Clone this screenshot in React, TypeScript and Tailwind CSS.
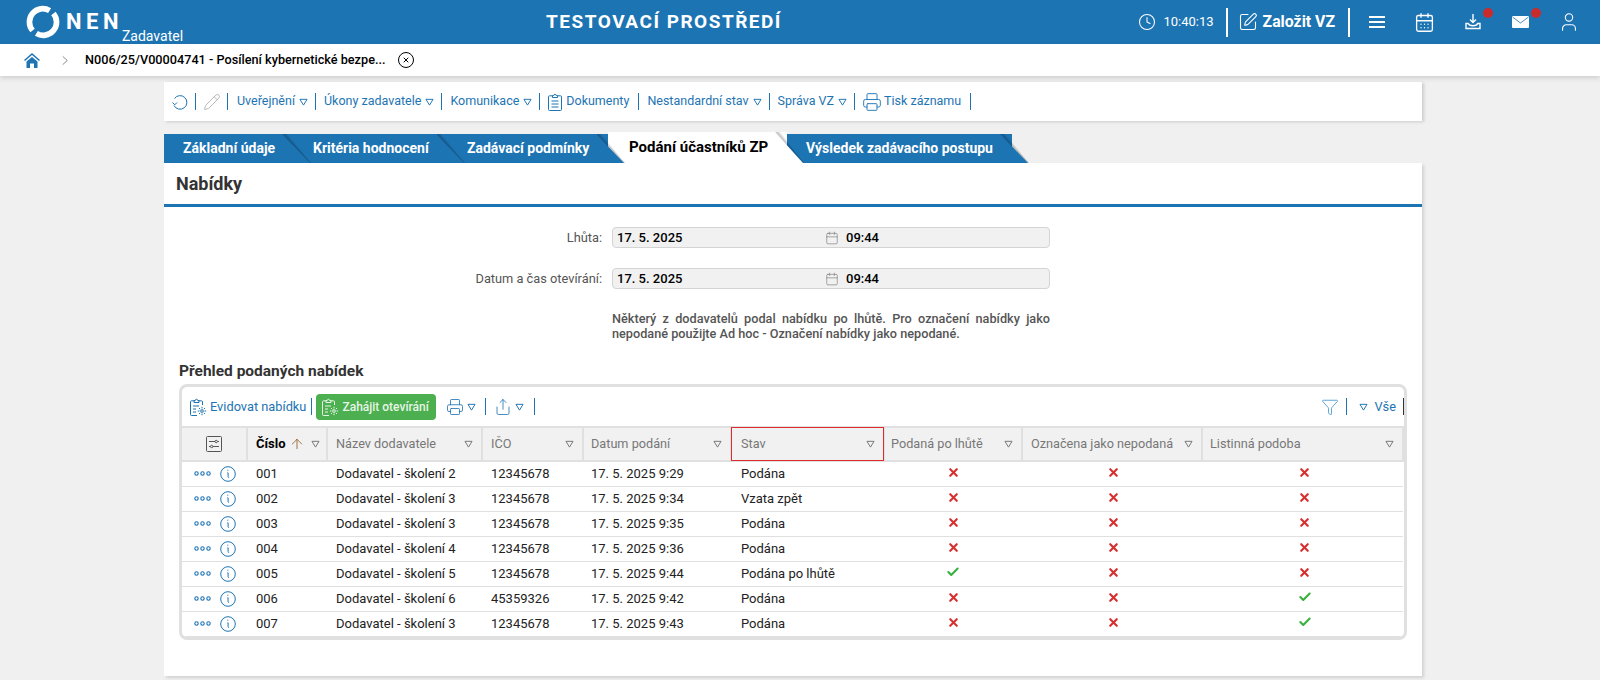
import { ArrowUp, Calendar, CalendarDays, Check, Clock, Funnel, Pencil, Printer, Share, SquarePen, User, X } from "lucide-react";
import type { ReactNode } from "react";

const navItems = [
  { label: "Uveřejnění", menu: true },
  { label: "Úkony zadavatele", menu: true },
  { label: "Komunikace", menu: true },
  { label: "Dokumenty", icon: "doc" },
  { label: "Nestandardní stav", menu: true },
  { label: "Správa VZ", menu: true },
  { label: "Tisk záznamu", icon: "print" },
];

const tabs = [
  { label: "Základní údaje", width: "w-[130px]" },
  { label: "Kritéria hodnocení", width: "w-[154px]" },
  { label: "Zadávací podmínky", width: "w-[160px]" },
  { label: "Podání účastníků ZP", width: "w-[179px]", active: true },
  { label: "Výsledek zadávacího postupu", width: "w-[225px]" },
];

const columns = [
  { label: "Název dodavatele", width: "w-[155px]", pad: "pl-[8px]" },
  { label: "IČO", width: "w-[101px]", pad: "pl-[8px]" },
  { label: "Datum podání", width: "w-[148px]", pad: "pl-[7px]" },
  { label: "Stav", width: "w-[153px]", pad: "pl-[9px]", marked: true },
  { label: "Podaná po lhůtě", width: "w-[138px]", pad: "pl-[6px]" },
  { label: "Označena jako nepodaná", width: "w-[180px]", pad: "pl-[8px]" },
  { label: "Listinná podoba", width: "w-[201px]", pad: "pl-[7px]" },
];

const rows = [
  { no: "001", name: "Dodavatel - školení 2", ico: "12345678", date: "17. 5. 2025 9:29", state: "Podána", late: false, paper: false },
  { no: "002", name: "Dodavatel - školení 3", ico: "12345678", date: "17. 5. 2025 9:34", state: "Vzata zpět", late: false, paper: false },
  { no: "003", name: "Dodavatel - školení 3", ico: "12345678", date: "17. 5. 2025 9:35", state: "Podána", late: false, paper: false },
  { no: "004", name: "Dodavatel - školení 4", ico: "12345678", date: "17. 5. 2025 9:36", state: "Podána", late: false, paper: false },
  { no: "005", name: "Dodavatel - školení 5", ico: "12345678", date: "17. 5. 2025 9:44", state: "Podána po lhůtě", late: true, paper: false },
  { no: "006", name: "Dodavatel - školení 6", ico: "45359326", date: "17. 5. 2025 9:42", state: "Podána", late: false, paper: true },
  { no: "007", name: "Dodavatel - školení 3", ico: "12345678", date: "17. 5. 2025 9:43", state: "Podána", late: false, paper: true },
];

function Caret({ className = "text-[#1d74b3]" }: { className?: string }) {
  return (
    <svg viewBox="0 0 10 9" className={`h-[8px] w-[9px] shrink-0 ${className}`} fill="none" stroke="currentColor" strokeWidth="1.1">
      <path d="M1 1.500h8L5 8z" />
    </svg>
  );
}

function Logo() {
  return (
    <svg viewBox="0 0 36 36" className="h-[34px] w-[34px]" fill="none" stroke="white" strokeWidth="6">
      <path d="M7 27A14 14 0 0 1 25 6" />
      <path d="M29 9A14 14 0 0 1 11 30" />
    </svg>
  );
}

function Divider({ className = "" }: { className?: string }) {
  return <span className={`h-[17px] w-px shrink-0 bg-[#1d74b3] ${className}`} />;
}

function Dots() {
  return (
    <svg viewBox="0 0 17 5" className="h-[5px] w-[17px]" fill="none" stroke="#1d74b3" strokeWidth="1.1">
      <circle cx="2.500" cy="2.500" r="1.700" />
      <circle cx="8.500" cy="2.500" r="1.700" />
      <circle cx="14.500" cy="2.500" r="1.700" />
    </svg>
  );
}

function InfoIcon() {
  return (
    <svg viewBox="0 0 16 16" className="h-4 w-4" fill="none" stroke="#1d74b3">
      <circle cx="8" cy="8" r="7.300" />
      <path d="M7.800 3.700v1M7.400 6.800h.7v3.800c0 .8.400 1 1 .8" />
    </svg>
  );
}

function RefreshIcon() {
  return (
    <svg viewBox="0 0 16 16" className="h-4 w-4" fill="none" stroke="#1d74b3" strokeWidth="1">
      <path d="M2.500 4.500A6.800 6.800 0 1 1 2 11.500" />
      <path d="M.5 8.500 2.800 10.800 5 8.500" />
    </svg>
  );
}

function DocIcon() {
  return (
    <svg viewBox="0 0 14 18" className="h-[18px] w-[14px]" fill="none" stroke="currentColor" strokeWidth="1">
      <path d="M4.500 2.800H1.500a1 1 0 0 0-1 1V16.500a1 1 0 0 0 1 1h11a1 1 0 0 0 1-1V3.800a1 1 0 0 0-1-1H9.500" />
      <path d="M4.500 4.500V2.500h1.300a1.200 1.200 0 0 1 2.400 0h1.300v2z" />
      <path d="M3.500 8h7M3.500 11h7M3.500 14h7" />
    </svg>
  );
}

function GearDocIcon() {
  return (
    <svg viewBox="0 0 17 18" className="h-[18px] w-[17px]" fill="none" stroke="currentColor" strokeWidth="1">
      <path d="M4.500 2.800H1.500a1 1 0 0 0-1 1V16.500a1 1 0 0 0 1 1H7M12.500 7V3.800a1 1 0 0 0-1-1H8.500" />
      <path d="M4 4.500V2.500h1.300a1.200 1.200 0 0 1 2.400 0H9v2z" />
      <path d="M3 8h6M3 11h3M3 14h3" />
      <circle cx="12" cy="13" r="1.300" />
      <path d="M12 8.800v1.700M12 15.500v1.700M7.800 13h1.700M14.500 13h1.700M9 10l1.200 1.200M13.800 14.800 15 16M15 10l-1.200 1.200M10.200 14.800 9 16" />
    </svg>
  );
}

function DateField({ label }: { label: string }) {
  return (
    <div className="flex items-center">
      <span className="w-[448px] pr-[10px] text-right text-[12.8px] text-[#555]">{label}</span>
      <div className="flex h-[21px] w-[438px] items-center rounded-[4px] border border-[#d4d4d4] bg-[#f1f1f1] pl-[4px] text-[13px] font-medium text-black">
        <span className="w-[208px]">17. 5. 2025</span>
        <Calendar className="h-[14px] w-[14px] text-[#777]" strokeWidth={1.100} />
        <span className="ml-[7px]">09:44</span>
      </div>
    </div>
  );
}

function Cell({ children, className = "" }: { children?: ReactNode; className?: string }) {
  return <td className={`border-b border-[#e0e0e0] p-0 text-[13px] text-[#222] ${className}`}>{children}</td>;
}

function Mark({ ok }: { ok: boolean }) {
  return ok ? (
    <Check className="mx-auto -mt-[3px] h-[14px] w-[14px] text-[#37b03c]" strokeWidth={3.500} />
  ) : (
    <X className="mx-auto -mt-[3px] h-[13px] w-[13px] text-[#d5302f]" strokeWidth={4} />
  );
}

export default function App() {
  return (
    <div className="h-[680px] overflow-hidden bg-[#f0f0f0] font-['Roboto',sans-serif]">
      <header className="flex h-[44px] items-center bg-[#1d74b3] text-white">
        <div className="flex h-full w-[433px] items-center pl-[26px]">
          <Logo />
          <span className="ml-[6px] text-[22px] leading-none font-bold tracking-[4.500px]">NEN</span>
          <span className="mt-[28px] -ml-[1px] text-[14px] leading-none">Zadavatel</span>
        </div>
        <div className="w-[462px] text-center text-[19px] font-bold tracking-[1.500px]">TESTOVACÍ PROSTŘEDÍ</div>
        <div className="ml-auto flex h-full items-center">
          <Clock className="h-[18px] w-[18px]" strokeWidth={1.400} />
          <span className="ml-[7px] text-[13px]">10:40:13</span>
          <span className="ml-[12px] h-[29px] w-[2px] bg-white" />
          <SquarePen className="ml-[10px] h-[20px] w-[20px]" strokeWidth={1.300} />
          <span className="ml-[5px] text-[15.800px] font-bold">Založit VZ</span>
          <span className="ml-[13px] h-[29px] w-[2px] bg-white" />
          <svg viewBox="0 0 16 14" className="ml-[19px] h-[14px] w-[16px]" stroke="white" strokeWidth="1.800">
            <path d="M0 2h16M0 7h16M0 12h16" />
          </svg>
          <CalendarDays className="ml-[29px] h-[21px] w-[21px]" strokeWidth={1.500} />
          <div className="relative ml-[30px]">
            <svg viewBox="0 0 16 16" className="h-[16px] w-[16px]" fill="none" stroke="white" strokeWidth="1.400">
              <path d="M8 0v8M5 5.500 8 8.500l3-3M3.500 9.500H1v5h14v-5h-2.500c-.5 2-1.500 2.200-4.500 2.200s-4-.2-4.500-2.200" />
            </svg>
            <span className="absolute -top-[6px] left-[18px] h-[10px] w-[10px] rounded-full bg-[#cc2b2b]" />
          </div>
          <div className="relative ml-[31px]">
            <svg viewBox="0 0 17 12" className="h-[12px] w-[17px]">
              <rect width="17" height="12" rx="1" fill="white" />
              <path d="M.5 1 8.500 7l8-6" fill="none" stroke="#1d74b3" strokeWidth=".8" />
            </svg>
            <span className="absolute -top-[8px] left-[19px] h-[10px] w-[10px] rounded-full bg-[#cc2b2b]" />
          </div>
          <User className="mr-[20px] ml-[29px] h-[22px] w-[22px]" strokeWidth={1.200} />
        </div>
      </header>

      <div className="relative flex h-[32px] items-center bg-white pl-[24px] shadow-[0_2px_5px_rgba(0,0,0,0.15)]">
        <svg viewBox="0 0 16 16" className="h-[16px] w-[16px]" fill="#1d74b3">
          <path d="M8 1 0 8l1 1 7-6 7 6 1-1zM2.500 9.500 8 5l5.500 4.500V16H10v-4.500H6V16H2.500z" />
        </svg>
        <svg viewBox="0 0 8 12" className="ml-[22px] h-[11px] w-[6px]" fill="none" stroke="#666" strokeWidth="1">
          <path d="m1 .5 6 5.500-6 5.500" />
        </svg>
        <span className="ml-[17px] text-[12.700px] font-medium text-black">N006/25/V00004741 - Posílení kybernetické bezpe...</span>
        <span className="ml-[12px] flex h-[16px] w-[16px] items-center justify-center rounded-full border border-black">
          <X className="h-[8px] w-[8px] text-black" strokeWidth={3} />
        </span>
      </div>

      <main className="mt-[6px] ml-[164px] w-[1258px]">
        <nav className="flex h-[39px] items-center bg-white pl-[8px] text-[12.500px] text-[#1d74b3] shadow-[2px_1px_3px_rgba(0,0,0,0.15)]">
          <RefreshIcon />
          <Divider className="ml-[7px]" />
          <Pencil className="ml-[7px] h-[18px] w-[18px] text-[#aaa]" strokeWidth={1.100} />
          <Divider className="ml-[6px]" />
          {navItems.map((item, index) => (
            <div key={item.label} className={`flex items-center gap-[4px] ${index === 0 ? "ml-[9px]" : "ml-[8px]"}`}>
              {item.icon === "doc" && <DocIcon />}
              {item.icon === "print" && <Printer className="-mr-[2px] -ml-[1px] h-[20px] w-[20px]" strokeWidth={1.100} />}
              <span className="whitespace-nowrap">{item.label}</span>
              {item.menu && <Caret />}
              <Divider className={item.menu ? "ml-[3px]" : "ml-[5px]"} />
            </div>
          ))}
        </nav>

        <div className="mt-[13px] flex h-[29px] items-end">
          {tabs.map((tab, index) => (
            <div
              key={tab.label}
              style={{ zIndex: tabs.length - index }}
              className={`relative flex shrink-0 items-center ${tab.width} ${tab.active ? "h-[31px] bg-white pl-[21px] text-[15px] font-bold text-black" : "h-[29px] bg-[#1d74b3] pl-[19px] text-[14px] font-bold text-white"}`}
            >
              <span className="relative z-20 whitespace-nowrap">{tab.label}</span>
              <svg viewBox="0 0 33 29" preserveAspectRatio="none" className="absolute top-0 -right-[21px] h-full w-[33px]">
                <path d="M0 0h5l24 29H24z" fill="#000" opacity=".1" />
                <path d="M0 0h3l26 29H24z" fill="#000" opacity=".12" />
                <path d="M0 0 28 29H0z" fill={tab.active ? "#fff" : "#1d74b3"} />
              </svg>
            </div>
          ))}
        </div>

        <section className="relative z-10 h-[513px] bg-white shadow-[2px_2px_3px_rgba(0,0,0,0.13)]">
          <h1 className="flex h-[44px] items-center border-b-[3px] border-[#1d74b3] pl-[12px] text-[18px] font-bold text-[#333]">Nabídky</h1>

          <div className="mt-[20px] flex flex-col gap-[20px]">
            <DateField label="Lhůta:" />
            <DateField label="Datum a čas otevírání:" />
          </div>

          <p className="mt-[22px] ml-[448px] w-[438px] text-justify text-[12.700px] leading-[15px] font-medium text-[#555]">
            Některý z dodavatelů podal nabídku po lhůtě. Pro označení nabídky jako nepodané použijte Ad hoc - Označení nabídky jako nepodané.
          </p>

          <h2 className="mt-[20px] ml-[15px] text-[15.500px] leading-[20px] font-bold text-[#333]">Přehled podaných nabídek</h2>

          <div className="mt-[3px] ml-[15px] w-[1228px] overflow-hidden rounded-[8px] border-[3px] border-[#e0e0e0]">
            <div className="flex h-[39px] items-center pl-[8px] text-[12.800px] text-[#1d74b3]">
              <GearDocIcon />
              <span className="ml-[3px]">Evidovat nabídku</span>
              <Divider className="ml-[5px]" />
              <div className="ml-[4px] flex h-[26px] w-[120px] items-center rounded-[4px] bg-[#4caf50] pl-[6px] text-[12px] font-medium text-[#e6f5e6]">
                <GearDocIcon />
                <span className="ml-[3px]">Zahájit otevírání</span>
              </div>
              <Printer className="ml-[10px] h-[18px] w-[18px]" strokeWidth={1.100} />
              <span className="ml-[3px]"><Caret /></span>
              <Divider className="ml-[9px]" />
              <Share className="ml-[8px] h-[18px] w-[18px]" strokeWidth={1.100} />
              <span className="ml-[3px]"><Caret /></span>
              <Divider className="ml-[10px]" />
              <div className="ml-auto flex items-center">
                <Funnel className="h-[18px] w-[18px] text-[#3d93d0]" strokeWidth={1.100} />
                <Divider className="ml-[7px]" />
                <span className="ml-[12px]"><Caret /></span>
                <span className="ml-[6px]">Vše</span>
                <span className="ml-[7px] h-[17px] w-px bg-[#333]" />
              </div>
            </div>

            <table className="w-full table-fixed border-collapse">
              <thead>
                <tr className="h-[34px] border-y-2 border-[#e0e0e0] bg-[#f1f1f1] text-left text-[12.700px] font-normal text-[#777]">
                  <th className="w-[65px] border-r-2 border-[#e0e0e0] p-0">
                    <svg viewBox="0 0 16 16" className="mx-auto h-[16px] w-[16px]" fill="none" stroke="#555" strokeWidth="1">
                      <rect x=".5" y=".5" width="15" height="15" rx="1" />
                      <path d="M3 5.500h6M11.500 5.500H13M3 10.500h1.500M7 10.500h6" />
                      <circle cx="10.200" cy="5.500" r="1.200" />
                      <circle cx="5.700" cy="10.500" r="1.200" />
                    </svg>
                  </th>
                  <th className="w-[80px] border-r-2 border-[#e0e0e0] p-0">
                    <div className="flex items-center pl-[8px] text-[13px] font-bold text-black">
                      Číslo
                      <ArrowUp className="ml-[3px] h-[16px] w-[16px] text-[#8a5518]" strokeWidth={1.200} />
                      <span className="ml-[6px]"><Caret className="text-[#777]" /></span>
                    </div>
                  </th>
                  {columns.map((col) => (
                    <th key={col.label} className={`${col.width} border-r-2 border-[#e0e0e0] p-0 font-normal ${col.marked ? "outline -outline-offset-1 outline-[#e02b2b]" : ""}`}>
                      <div className={`flex items-center justify-between pr-[8px] ${col.pad}`}>
                        <span className="whitespace-nowrap">{col.label}</span>
                        <Caret className="text-[#777]" />
                      </div>
                    </th>
                  ))}
                </tr>
              </thead>
              <tbody>
                {rows.map((row) => (
                  <tr key={row.no} className="h-[25px]">
                    <Cell>
                      <div className="flex items-center pl-[12px]">
                        <Dots />
                        <span className="ml-[9px]"><InfoIcon /></span>
                      </div>
                    </Cell>
                    <Cell className="pl-[9px]">{row.no}</Cell>
                    <Cell className="pl-[9px]">{row.name}</Cell>
                    <Cell className="pl-[9px]">{row.ico}</Cell>
                    <Cell className="pl-[8px]">{row.date}</Cell>
                    <Cell className="pl-[10px]">{row.state}</Cell>
                    <Cell><Mark ok={row.late} /></Cell>
                    <Cell className="pl-[2px]"><Mark ok={false} /></Cell>
                    <Cell className="pl-[4px]"><Mark ok={row.paper} /></Cell>
                  </tr>
                ))}
              </tbody>
            </table>
          </div>
        </section>
      </main>
    </div>
  );
}
